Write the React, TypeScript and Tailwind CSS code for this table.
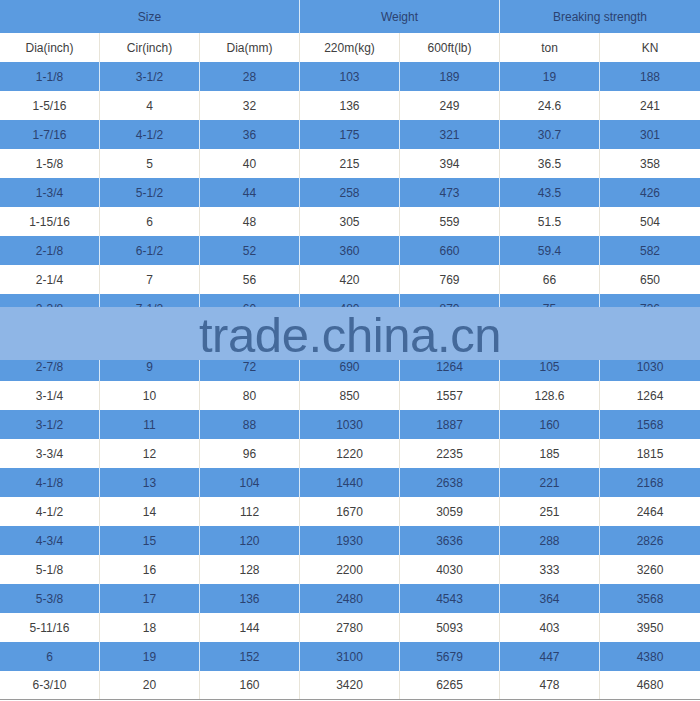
import React from 'react'

const rows = [
  ['1-1/8', '3-1/2', '28', '103', '189', '19', '188'],
  ['1-5/16', '4', '32', '136', '249', '24.6', '241'],
  ['1-7/16', '4-1/2', '36', '175', '321', '30.7', '301'],
  ['1-5/8', '5', '40', '215', '394', '36.5', '358'],
  ['1-3/4', '5-1/2', '44', '258', '473', '43.5', '426'],
  ['1-15/16', '6', '48', '305', '559', '51.5', '504'],
  ['2-1/8', '6-1/2', '52', '360', '660', '59.4', '582'],
  ['2-1/4', '7', '56', '420', '769', '66', '650'],
  ['2-3/8', '7-1/2', '60', '480', '870', '75', '736'],
  // row hidden behind the watermark band
  ['', '', '', '', '', '', ''],
  ['2-7/8', '9', '72', '690', '1264', '105', '1030'],
  ['3-1/4', '10', '80', '850', '1557', '128.6', '1264'],
  ['3-1/2', '11', '88', '1030', '1887', '160', '1568'],
  ['3-3/4', '12', '96', '1220', '2235', '185', '1815'],
  ['4-1/8', '13', '104', '1440', '2638', '221', '2168'],
  ['4-1/2', '14', '112', '1670', '3059', '251', '2464'],
  ['4-3/4', '15', '120', '1930', '3636', '288', '2826'],
  ['5-1/8', '16', '128', '2200', '4030', '333', '3260'],
  ['5-3/8', '17', '136', '2480', '4543', '364', '3568'],
  ['5-11/16', '18', '144', '2780', '5093', '403', '3950'],
  ['6', '19', '152', '3100', '5679', '447', '4380'],
  ['6-3/10', '20', '160', '3420', '6265', '478', '4680'],
]

const subHeads = ['Dia(inch)', 'Cir(inch)', 'Dia(mm)', '220m(kg)', '600ft(lb)', 'ton', 'KN']

export default function App() {
  return (
    <div
      className="relative w-[700px] h-[701px] bg-white text-[12px]"
      style={{ fontFamily: '"Liberation Sans", Arial, sans-serif' }}
    >
      {/* top header */}
      <div className="grid grid-cols-7 h-[33px] bg-[#5b9be0] text-[#2b4270]">
        <div className="col-span-3 flex items-center justify-center border-r border-[#d6e8f8]">Size</div>
        <div className="col-span-2 flex items-center justify-center border-r border-[#d6e8f8]">Weight</div>
        <div className="col-span-2 flex items-center justify-center">Breaking strength</div>
      </div>

      {/* sub header */}
      <div className="grid grid-cols-7 h-[29px] bg-white text-[#404040]">
        {subHeads.map((h, i) => (
          <div
            key={h}
            className={`flex items-center justify-center ${i < 6 ? 'border-r border-[#e8e4d8]' : ''}`}
          >
            {h}
          </div>
        ))}
      </div>

      {rows.map((r, ri) => {
        const blue = ri % 2 === 0
        const last = ri === rows.length - 1
        return (
          <div
            key={ri}
            className={`grid grid-cols-7 h-[29px] ${
              blue ? 'bg-[#5b9be0] text-[#2b4270]' : 'bg-white text-[#404040]'
            } ${last ? 'border-b border-[#9a9a9a]' : ''}`}
          >
            {r.map((c, ci) => (
              <div
                key={ci}
                className={`flex items-center justify-center ${
                  ci < 6 ? (blue ? 'border-r border-[#d6e8f8]' : 'border-r border-[#e8e4d8]') : ''
                }`}
              >
                {c}
              </div>
            ))}
          </div>
        )
      })}

      {/* watermark band */}
      <div className="absolute left-0 right-0 top-[307px] h-[53px] bg-[#8fb6e6] flex items-center justify-center pt-[3px]">
        <span className="text-[49px] leading-none text-[#44699a] tracking-[-0.4px]">trade.china.cn</span>
      </div>
    </div>
  )
}
